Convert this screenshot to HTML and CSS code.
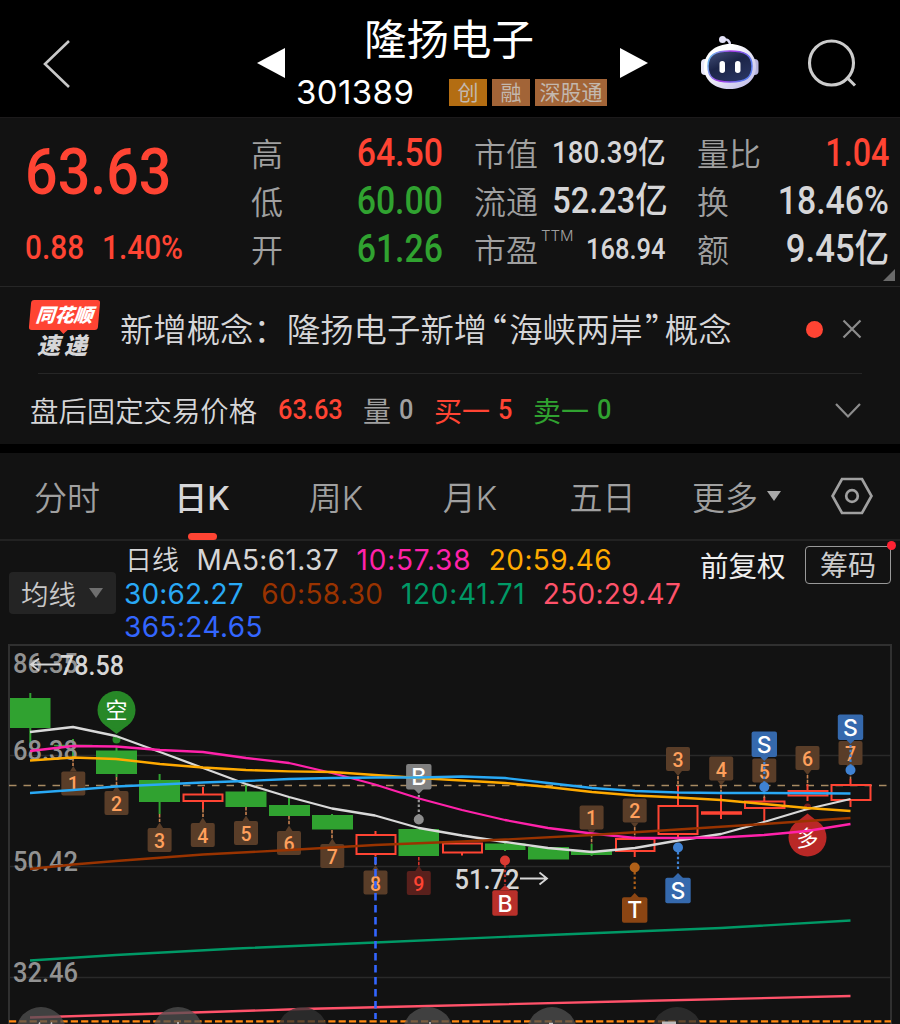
FILE: index.html
```html
<!DOCTYPE html>
<html lang="zh-CN">
<head>
    <meta charset="UTF-8">
    <meta name="viewport" content="width=device-width, initial-scale=1.0">
    <title>隆扬电子 301389</title>
    <link rel="stylesheet" href="styles.css">
</head>
<body>
    <header class="topbar">
        <svg class="back" width="30" height="50" viewBox="0 0 30 50"><path d="M27 2 3 25 27 48"/></svg>
        <svg class="arrow" width="28" height="32" viewBox="0 0 28 32"><path d="M28 1v30L0 16z"/></svg>
        <div class="stock">
            <h1>隆扬电子</h1>
            <div class="stock-sub">
                <span class="code">301389</span>
                <span class="tag tag-gold">创</span>
                <span class="tag">融</span>
                <span class="tag tag-wide">深股通</span>
            </div>
        </div>
        <svg class="arrow" width="28" height="32" viewBox="0 0 28 32"><path d="M0 1v30l28-15z"/></svg>
        <svg class="robot" width="60" height="56" viewBox="0 0 60 56">
            <defs>
                <linearGradient id="shell" x1="0" y1="0" x2="1" y2="1">
                    <stop offset="0.3" stop-color="#ffffff"/>
                    <stop offset="1" stop-color="#b9b5e6"/>
                </linearGradient>
                <linearGradient id="rim" x1="0" y1="0" x2="1" y2="0.3">
                    <stop offset="0" stop-color="#5fd0f0"/>
                    <stop offset="0.5" stop-color="#a838e8"/>
                    <stop offset="1" stop-color="#5a7cf0"/>
                </linearGradient>
                <linearGradient id="face" x1="0" y1="0" x2="0.6" y2="1">
                    <stop offset="0" stop-color="#46527c"/>
                    <stop offset="0.5" stop-color="#1c2548"/>
                    <stop offset="1" stop-color="#27335e"/>
                </linearGradient>
            </defs>
            <path d="M23 4.500q7-1 7 6" fill="none" stroke="#dcdaf5" stroke-width="2.500"/>
            <circle cx="22.500" cy="4.500" r="3.500" fill="#e4e2f8"/>
            <rect x="1" y="24" width="9" height="16" rx="4" fill="#e9e8f8"/>
            <rect x="50" y="24" width="8.500" height="16" rx="4" fill="#b6b4dd"/>
            <path d="M30 9C44 9 56 18 56 32S44 54 29.500 54 4 46 4 32 16 9 30 9z" fill="url(#shell)"/>
            <path d="M30 16c15 0 22 4 22 15s-5 16-22 16S8 42 8 31s7-15 22-15z" fill="url(#face)" stroke="url(#rim)" stroke-width="1.500"/>
            <rect x="19.500" y="26" width="5.500" height="12" rx="2.700" fill="#fff"/>
            <rect x="35" y="26" width="5.500" height="12" rx="2.700" fill="#fff"/>
        </svg>
        <svg class="search" width="52" height="52" viewBox="0 0 52 52"><circle cx="24.500" cy="25" r="22"/><path d="m39.500 39 8.500 8.500"/></svg>
    </header>

    <section class="quote">
        <div class="price">
            <div class="num price-now">63.63</div>
            <div class="price-change"><span class="num">0.88</span><span class="num">1.40%</span></div>
        </div>
        <dl class="stats">
            <div><dt>高</dt><dd class="num up">64.50</dd></div>
            <div><dt>市值</dt><dd class="num small">180.39亿</dd></div>
            <div><dt>量比</dt><dd class="num narrow up">1.04</dd></div>
            <div><dt>低</dt><dd class="num down">60.00</dd></div>
            <div><dt>流通</dt><dd class="num medium">52.23亿</dd></div>
            <div><dt>换</dt><dd class="num">18.46%</dd></div>
            <div><dt>开</dt><dd class="num down">61.26</dd></div>
            <div><dt>市盈<sup>TTM</sup></dt><dd class="num tiny">168.94</dd></div>
            <div><dt>额</dt><dd class="num large">9.45亿</dd></div>
        </dl>
        <svg class="corner" width="12" height="12" viewBox="0 0 12 12"><path d="M12 0v12H0z"/></svg>
    </section>

    <section class="news">
        <div class="news-row">
            <div class="news-logo">
                <span class="logo-top">同花顺</span>
                <span class="logo-bottom">速递</span>
            </div>
            <p class="news-text">新增概念：隆扬电子新增<span class="quote-mark">“</span>海峡两岸<span class="quote-mark">”</span>概念</p>
            <span class="dot"></span>
            <svg class="close" width="20" height="20" viewBox="0 0 20 20"><path d="m1.500 1.500 17 17M18.500 1.500l-17 17"/></svg>
        </div>
        <div class="after-row">
            <span class="after-label">盘后固定交易价格</span>
            <span class="num after-price">63.63</span>
            <span class="after-vol">量</span><span class="num after-vol">0</span>
            <span class="up">买一</span><span class="num up">5</span>
            <span class="down">卖一</span><span class="num down">0</span>
            <svg class="chevron" width="28" height="18" viewBox="0 0 28 18"><path d="m2 3 12 12.500L26 3"/></svg>
        </div>
    </section>

    <nav class="tabs">
        <a>分时</a>
        <a class="active">日K</a>
        <a>周K</a>
        <a>月K</a>
        <a>五日</a>
        <a>更多<svg class="caret" width="14" height="10" viewBox="0 0 14 10"><path d="M0 0h14L7 10z"/></svg></a>
        <a><svg class="settings" width="42" height="38" viewBox="0 0 42 38"><path d="M11 2h20l9.500 17L31 36H11L1.500 19z"/><circle cx="21" cy="19" r="5.800"/></svg></a>
    </nav>

    <section class="legend">
        <button class="ma-button">均线<svg class="caret" width="14" height="10" viewBox="0 0 14 10"><path d="M0 0h14L7 10z"/></svg></button>
        <div class="ma-list">
            <div><span class="cjk">日线</span><span class="ma5">MA5:61.37</span><span class="ma10">10:57.38</span><span class="ma20">20:59.46</span></div>
            <div><span class="ma30">30:62.27</span><span class="ma60">60:58.30</span><span class="ma120">120:41.71</span><span class="ma250">250:29.47</span></div>
            <div><span class="ma365">365:24.65</span></div>
        </div>
        <span class="adjust">前复权</span>
        <button class="chips">筹码</button>
    </section>

    <svg class="chart" width="900" height="384" viewBox="0 640 900 384">
        <defs>
            <g id="tag-below"><path d="M-3.500-12 0-17.500 3.500-12z"/><rect x="-12" y="-12" width="24" height="24" rx="2"/></g>
            <g id="tag-above"><path d="M-4 12 0 17 4 12z"/><rect x="-12" y="-12" width="24" height="24" rx="2"/></g>
            <rect id="sign" x="-12.700" y="-12.700" width="25.400" height="25.400" rx="2"/>
        </defs>

        <!-- grid -->
        <g class="grid">
            <path d="M9 755.500H891M9 866.500H891M9 977.500H891"/>
            <path class="frame" d="M9 1024V645H891V1024"/>
        </g>
        <path class="last-price" d="M9 785.500H891"/>

        <!-- candles -->
        <g class="candle-down">
            <path d="M30.300 693v55M73 739v19M116.500 747v30M159.600 774v40M246 785v22M289 798v18M332 814v15M505 843v8M591.600 844v12"/>
            <path class="body" d="M10 698h40.500v30H10zM54 744.800h38.500v1.500H54zM96 750.500h41V774H96zM139 780h41v22h-41zM225.500 791.500h41V807h-41zM269 805h41v11h-41zM312 815h41v14.500h-41zM398.500 829h40.500v27h-40.500zM485 843.500h40.500v6.500H485zM528 847h41v12.500h-41zM571 851h41v4h-41z"/>
        </g>
        <g class="candle-up">
            <path d="M203 787v7M203 802v7M375.500 831v4M375.500 854v2.500M462 853v2.500M634.700 851v6M678 786v20M678 834v3M721 795v24M764.300 797v4M764.300 808v14M807.500 784v6M807.500 796v5M850.500 779v6M850.500 800v7"/>
            <path d="M183.500 794.500h39v6.500h-39zM356.500 835h39v19h-39zM443 843.500h39v9h-39zM616 839h38.500v12H616zM658.500 806h39v28h-39zM745 801.500h39.500v6.500H745zM788.500 791h39v4.500h-39zM831.500 785h39v15h-39z"/>
            <path class="flat" d="M701 813h41"/>
        </g>

        <!-- count tags -->
        <path class="tag-stem" d="M73 758v8M116.500 777v9M159.600 814v8M203 809v8M246 807v8M289 816v9M332 830v9M375.500 857v8M591.600 834v10M634.700 827v11M678 776v10M721 785v10M764.300 786v12M807.500 775v10M850.500 767v12"/>
        <path class="tag-stem red" d="M418.800 857v10"/>
        <g class="count-tag">
            <use href="#tag-below" x="73.300" y="783.500"/><use href="#tag-below" x="116.500" y="803"/>
            <use href="#tag-below" x="159.600" y="840"/><use href="#tag-below" x="202.800" y="835"/>
            <use href="#tag-below" x="246" y="833"/><use href="#tag-below" x="289" y="843"/>
            <use href="#tag-below" x="332.300" y="856"/><use href="#tag-below" x="375.500" y="882.500"/>
            <use href="#tag-above" x="591.600" y="817.500"/><use href="#tag-above" x="634.700" y="810.500"/>
            <use href="#tag-above" x="678" y="759"/><use href="#tag-above" x="721.200" y="768.500"/>
            <use href="#tag-above" x="764.300" y="770.500"/><use href="#tag-above" x="807.500" y="758"/>
            <use href="#tag-above" x="850.500" y="753"/>
            <use class="nine" href="#tag-below" x="418.800" y="883"/>
        </g>
        <g class="count-text">
            <text x="73.300" y="791">1</text><text x="116.500" y="810.500">2</text><text x="159.600" y="847.500">3</text>
            <text x="202.800" y="842.500">4</text><text x="246" y="840.500">5</text><text x="289" y="850.500">6</text>
            <text x="332.300" y="863.500">7</text><text x="375.500" y="890.500">8</text><text class="nine" x="418.800" y="891">9</text>
            <text x="591.600" y="825">1</text><text x="634.700" y="818">2</text><text x="678" y="767">3</text>
            <text x="721.200" y="776.500">4</text><text x="764.300" y="778.500">5</text><text x="807.500" y="765.500">6</text>
            <text x="850.500" y="761">7</text>
        </g>

        <!-- long / short pins -->
        <g class="pin-short">
            <path d="M105 725 116.500 734 128 725z"/><circle cx="116.500" cy="710" r="19"/><circle cx="116.500" cy="739.500" r="4"/>
            <text x="116.500" y="718">空</text>
        </g>
        <g class="pin-long">
            <path d="M798 821 807.500 813.500 817 821z"/><circle cx="807.500" cy="837.500" r="19"/><circle cx="807.500" cy="807" r="3.500" opacity="0.6"/>
            <text x="807.500" y="845.500">多</text>
        </g>

        <!-- axis labels -->
        <g class="axis">
            <text x="13" y="673" textLength="65" lengthAdjust="spacingAndGlyphs">86.35</text>
            <text x="13" y="759.500" textLength="65" lengthAdjust="spacingAndGlyphs">68.38</text>
            <text x="13" y="870.500" textLength="65" lengthAdjust="spacingAndGlyphs">50.42</text>
            <text x="13" y="981.500" textLength="65" lengthAdjust="spacingAndGlyphs">32.46</text>
        </g>
        <g class="extreme">
            <path d="M60 664.500H31M39 658.500l-8 6 8 6"/>
            <text x="60" y="674.500" textLength="64" lengthAdjust="spacingAndGlyphs">78.58</text>
            <text x="454.500" y="888.500" textLength="65" lengthAdjust="spacingAndGlyphs">51.72</text>
            <path d="M520 878.500h26.500M539.500 872.500l7.500 6-7.500 6"/>
        </g>

        <!-- buy / sell signs -->
        <g class="sign-gray">
            <circle cx="418.800" cy="819.500" r="5"/><path d="M418.800 795v20"/><path class="tip" d="M414 789h9.600l-4.800 5z"/>
            <use href="#sign" x="418.800" y="776.800"/><text x="418.800" y="785">B</text>
        </g>
        <g class="sign-red">
            <circle cx="505" cy="860.500" r="5"/><path d="M505 865v20"/><path class="tip" d="M500 890h10l-5-5z"/>
            <use href="#sign" x="505" y="903"/><text x="505" y="911.500">B</text>
        </g>
        <g class="sign-orange">
            <circle cx="634.700" cy="867.500" r="5"/><path d="M634.700 872v18"/><path class="tip" d="M630 898h9.500l-4.800-5z"/>
            <use href="#sign" x="634.700" y="910"/><text x="634.700" y="918">T</text>
        </g>
        <g class="sign-blue">
            <circle cx="678" cy="847.500" r="5"/><path d="M678 852v18"/><path class="tip" d="M673 878h10l-5-5z"/>
            <use href="#sign" x="678" y="890.500"/><text x="678" y="899">S</text>
            <circle cx="764.300" cy="787" r="5"/><path d="M764.300 762v22"/><path class="tip" d="M759.300 756h10l-5 5z"/>
            <use href="#sign" x="764.300" y="744.300"/><text x="764.300" y="752.500">S</text>
            <circle cx="850.500" cy="770" r="5"/><path d="M850.500 745v22"/><path class="tip" d="M845.500 739h10l-5 5z"/>
            <use href="#sign" x="850.500" y="727.300"/><text x="850.500" y="735.500">S</text>
        </g>

        <!-- moving averages -->
        <g class="lines">
            <polyline class="ma5" points="30,732 73,727 116,736 160,752 203,768 246,784 289,797 332,808.500 375,815.500 419,828 462,835.500 505,842 548,848 592,852 635,848 678,840.500 721,834 764,822 807.500,809 850.500,799"/>
            <polyline class="ma10" points="30,751 73,746 116,746.500 160,750 203,752 246,758 289,763 332,773 375,784.500 419,798.500 462,810 505,820 548,828 592,833.500 635,838 678,838 721,837.500 764,835 807,831 850.500,824"/>
            <polyline class="ma20" points="30,760.500 73,757.500 116,759 160,764 203,767.500 246,770 289,771.300 332,772 375,775 419,778 462,780.500 505,783 548,787 592,792 635,795.500 678,797.500 721,800 764,804 807,808 850.500,811"/>
            <polyline class="ma30" points="30,793 73,790 116,786.500 160,784.500 203,782.500 246,781 289,779 332,778 375,777.500 419,777.500 462,776.500 505,778 548,783 592,788 635,791 678,792.500 721,793 764,793 850.500,793.500"/>
            <polyline class="ma60" points="30,869 73,864.500 116,861 203,854.500 289,850 375,845 462,841.500 505,839.500 592,835 678,829.500 764,824 850.500,818"/>
            <polyline class="ma120" points="30,960.500 116,955 237,948.500 375,942.500 549,935 634,931.500 721,928 850.500,920.500"/>
            <polyline class="ma250" points="30,1017.500 178,1013 302,1009 428,1006 640,1001 850.500,996"/>
        </g>
        <path class="event-line" d="M375.500 857V1019"/>
        <path class="bottom-line" d="M9 1021.300H891"/>

        <!-- floating round buttons cut by the bottom edge -->
        <g class="floats">
            <circle cx="41" cy="1032" r="25"/><circle cx="178" cy="1032" r="25"/><circle class="dim" cx="302.500" cy="1032" r="25"/>
            <circle cx="428" cy="1032" r="25"/><circle cx="552" cy="1032" r="25"/><circle class="dim" cx="677" cy="1032" r="25"/>
            <path d="M39 1024l1-1.500M51 1024l1-1.500M178 1022v2M430 1022v2M549 1023.500h4"/>
            <rect x="662" y="1021.500" width="14" height="3"/>
        </g>
    </svg>
</body>
</html>
```

FILE: styles.css
```css
:root {
    --bg: #121212;
    --line: #262626;
    --up: #ff4433;
    --down: #30a230;
    --text: #d6d6d8;
    --muted: #a0a0a0;
    --cjk: "Noto Sans CJK SC", sans-serif;
}

* {
    box-sizing: border-box;
    margin: 0;
    padding: 0;
}

body {
    width: 900px;
    height: 1024px;
    overflow: hidden;
    background-color: #000;
    color: var(--text);
    font-family: Inter, var(--cjk);
    white-space: nowrap;
}

svg {
    display: block;
    flex: none;
}

button {
    font-family: inherit;
    background: none;
    border: none;
}

.up { color: var(--up); }
.down { color: var(--down); }

/* narrow numerals */
.num {
    font-family: Roboto, var(--cjk);
    font-weight: 500;
    transform: scaleX(0.89);
    transform-origin: left center;
}

/* top bar */
.topbar {
    display: flex;
    height: 118px;
    padding-left: 42px;
    border-bottom: 1px solid #1c1a1b;
}

.back {
    margin: 39px 185px 0 0;
    fill: none;
    stroke: #c8c8c8;
    stroke-width: 2.6;
}

.arrow {
    margin-top: 47px;
    fill: #fff;
}

.stock {
    width: 335px;
    padding: 8px 0 0 12px;
}

.stock h1 {
    font-family: var(--cjk);
    font-size: 42.5px;
    font-weight: 400;
    line-height: 58px;
    padding-left: 67px;
    color: #fff;
}

.stock-sub {
    display: flex;
    align-items: center;
    gap: 5px;
    height: 52px;
}

.code {
    width: 148px;
    margin-left: -1px;
    font-size: 33px;
    letter-spacing: 0.4px;
    color: #fff;
}

.tag {
    width: 38px;
    height: 27px;
    background-color: #a26437;
    color: #c3b8ae;
    font-family: var(--cjk);
    font-size: 21px;
    line-height: 25px;
    text-align: center;
}

.tag-gold { background-color: #b36d12; }
.tag-wide { width: 72px; }

.robot { margin: 35px 0 0 52px; }

.search {
    margin: 38px 0 0 47px;
    fill: none;
    stroke: #ccc;
    stroke-width: 3.1;
}

/* quote */
.quote {
    display: flex;
    position: relative;
    height: 169px;
    background-color: var(--bg);
    border-bottom: 1px solid var(--line);
}

.price {
    width: 251px;
    padding: 18px 0 0 25px;
    color: var(--up);
}

.price-now {
    font-size: 64.5px;
    line-height: 72px;
}

.price-change {
    display: flex;
    margin-top: 20px;
    font-size: 33.5px;
    line-height: 40px;
}

.price-change span { width: 77px; }

.stats {
    display: grid;
    grid-template-columns: repeat(3, 192px);
    grid-auto-rows: 48px;
    column-gap: 31px;
    padding-top: 10px;
}

.stats div {
    display: flex;
    justify-content: space-between;
    align-items: center;
}

.stats dt {
    width: 66px;
    font-family: var(--cjk);
    font-size: 32px;
    font-weight: 350;
    line-height: 48px;
    color: var(--muted);
}

.stats sup {
    display: inline-block;
    height: 20px;
    margin-left: 3px;
    font-family: Inter;
    font-size: 15px;
    line-height: 15px;
    vertical-align: 21px;
}

.stats dd {
    font-size: 38px;
    line-height: 48px;
    padding-top: 2px;
    transform-origin: right center;
}

.stats dd.large { font-size: 39px; }
.stats dd.medium { font-size: 36.5px; }
.stats dd.small { font-size: 31px; }
.stats dd.tiny { font-size: 30px; transform: scaleX(0.85); }
.stats dd.narrow { transform: scaleX(0.85); }

.corner {
    position: absolute;
    right: 5px;
    bottom: 5px;
    fill: #6a6a6a;
}

/* news */
.news {
    height: 157px;
    padding: 0 38px 0 30px;
    background-color: var(--bg);
}

.news-row {
    display: flex;
    align-items: center;
    height: 86px;
    padding-bottom: 2px;
}

.news-logo {
    width: 90px;
    font-family: var(--cjk);
    font-weight: 900;
}

.news-logo span {
    display: block;
    font-size: 19px;
    font-style: italic;
}

.news-logo .logo-top {
    position: relative;
    width: 69px;
    height: 30px;
    border-radius: 3px;
    background-color: var(--up);
    color: #fff;
    line-height: 28px;
    text-align: center;
    transform: skewX(-5deg);
}

.logo-top::after {
    content: "";
    position: absolute;
    left: 30px;
    top: 29px;
    border: 5px solid transparent;
    border-top-color: var(--up);
    border-bottom: none;
}

.news-logo .logo-bottom {
    padding-left: 7px;
    font-size: 23px;
    letter-spacing: 4px;
    line-height: 29px;
}

.news-text {
    width: 687px;
    padding-bottom: 2px;
    font-family: var(--cjk);
    font-size: 33.4px;
    line-height: 48px;
    font-weight: 350;
}

.quote-mark {
    display: inline-block;
    width: 22px;
    text-align: center;
    font-feature-settings: "palt";
}

.dot {
    width: 17px;
    height: 17px;
    margin-right: 19px;
    border-radius: 50%;
    background-color: var(--up);
}

.close, .chevron {
    fill: none;
    stroke: #8c8c8c;
    stroke-width: 2.2;
}

.after-row {
    display: flex;
    align-items: center;
    height: 71px;
    margin-left: 8px;
    padding-top: 1px;
    border-top: 1px solid var(--line);
    font-size: 28px;
}

.after-row span { flex: none; }

.after-label {
    width: 248px;
    margin-left: -8px;
    font-size: 28.4px;
    font-weight: 350;
}

.after-price {
    width: 85px;
    color: var(--up);
}

.after-vol { color: var(--muted); }
.after-row .num { font-size: 28.5px; }
.after-row .after-vol:not(.num), .after-row .up:not(.num), .after-row .down:not(.num) { margin-right: 8px; }
.after-row .after-vol.num, .after-row .up.num { width: 35px; }

.chevron { margin-left: auto; }

/* tabs */
.tabs {
    display: grid;
    grid-template-columns: 134px 136px 132px 136px 129px 139px 92px;
    height: 88px;
    margin-top: 9px;
    background-color: var(--bg);
    border-bottom: 2px solid #222;
}

.tabs a {
    display: flex;
    position: relative;
    justify-content: center;
    align-items: center;
    font-size: 33px;
    font-weight: 350;
    color: var(--muted);
}

.tabs .active {
    color: var(--text);
    font-weight: 500;
}

.tabs .active::after {
    content: "";
    position: absolute;
    bottom: -1px;
    width: 29px;
    height: 7px;
    border-radius: 4px;
    background-color: var(--up);
}

.tabs .caret {
    margin-left: 9px;
    fill: #a8a8a8;
}

.settings {
    fill: none;
    stroke: #a0a0a0;
    stroke-width: 2.7;
}

/* legend */
.legend {
    display: flex;
    height: 99px;
    padding-left: 9px;
    background-color: var(--bg);
}

.ma-button {
    display: flex;
    align-items: center;
    width: 107px;
    height: 42px;
    margin: 31px 8px 0 0;
    padding-left: 12px;
    border-radius: 4px;
    background-color: #242424;
    color: #c8c8c8;
    font-family: var(--cjk);
    font-size: 27.5px;
    font-weight: 350;
}

.ma-button .caret {
    margin-left: 13px;
    fill: #6f6f6f;
}

.ma-list {
    width: 576px;
    font-size: 28px;
    letter-spacing: 0.4px;
    line-height: 33.5px;
    padding-top: 3px;
}

.ma-list div { height: 33.5px; }

.ma-list span { margin-right: 17.5px; }

.ma-list .cjk {
    margin-left: 1px;
    font-size: 27px;
    letter-spacing: 0;
    font-weight: 350;
}

.ma-list .ma5 { color: #d6d6d6; }
.ma-list .ma10 { color: #ff22aa; letter-spacing: 0.8px; }
.ma-list .ma20 { color: #ffaa00; }
.ma-list .ma30 { color: #29a9f5; letter-spacing: 0.15px; }
.ma-list .ma60 { color: #993300; }
.ma-list .ma120 { color: #009966; letter-spacing: 0.7px; }
.ma-list .ma250 { color: #ff526a; letter-spacing: 0.3px; }
.ma-list .ma365 { color: #3366ff; }

.adjust {
    width: 105px;
    font-size: 28.5px;
    line-height: 51px;
    color: #eee;
}

.chips {
    position: relative;
    width: 86px;
    height: 38px;
    margin-top: 5px;
    padding-top: 1px;
    border: 1px solid #999;
    border-radius: 4px;
    color: #ccc;
    font-size: 28px;
    line-height: 36px;
}

.chips::after {
    content: "";
    position: absolute;
    top: -6px;
    right: -6px;
    width: 9px;
    height: 9px;
    border-radius: 50%;
    background-color: #ff2233;
}

/* chart */
.chart {
    background-color: var(--bg);
    font-family: Roboto, var(--cjk);
}

.chart text { text-anchor: middle; }

.grid {
    fill: none;
    stroke: #292929;
    stroke-width: 1.4;
}

.frame {
    stroke: #303030;
    stroke-width: 2;
}

.last-price {
    stroke: #a88b63;
    stroke-width: 1.3;
    stroke-dasharray: 7.5 7;
}

.candle-down { stroke: var(--down); stroke-width: 2; }
.candle-down .body { fill: var(--down); stroke: none; }
.candle-up { fill: none; stroke: var(--up); stroke-width: 2; }
.candle-up .flat { stroke-width: 3.5; }

.lines {
    fill: none;
    stroke-width: 2.3;
    stroke-linejoin: round;
}

.lines .ma5 { stroke: #d9d9d9; }
.lines .ma10 { stroke: #ff22aa; }
.lines .ma20 { stroke: #ffaa00; }
.lines .ma30 { stroke: #29a9f5; }
.lines .ma60 { stroke: #993300; }
.lines .ma120 { stroke: #009966; }
.lines .ma250 { stroke: #ff526a; }

.tag-stem {
    stroke: #c88250;
    stroke-width: 1.6;
    stroke-dasharray: 3.5 1.3;
}

.tag-stem.red { stroke: #d33228; }

.count-tag { fill: #593d28; }
.count-tag .nine { fill: #59201c; }

.count-text {
    fill: #ffa05c;
    font-size: 19.5px;
    font-weight: 500;
}

.count-text .nine { fill: var(--up); }

.pin-short { fill: #278827; }
.pin-long { fill: #b92826; }

.pin-short text, .pin-long text {
    fill: #fff;
    font-size: 22px;
}

.sign-gray, .sign-red, .sign-orange, .sign-blue {
    stroke-width: 2.2;
    stroke-dasharray: 2.5 2.3;
}

.chart .tip, .chart use, .chart circle, .chart text { stroke: none; }

.sign-gray { fill: #808080; stroke: #999; }
.sign-red { fill: #b9302a; stroke: #b9302a; }
.sign-orange { fill: #8b4513; stroke: #b06018; }
.sign-blue { fill: #3569ad; stroke: #3f82d3; }
.sign-gray circle { fill: #8d8d8d; }
.sign-red circle { fill: #d93a32; }
.sign-orange circle { fill: #b06018; }
.sign-blue circle { fill: #3f82d3; }

.sign-gray text, .sign-red text, .sign-orange text, .sign-blue text {
    fill: #fff;
    font-family: Inter;
    font-size: 23px;
    font-weight: 500;
}

.chart .axis text, .chart .extreme text {
    font-size: 28px;
    font-weight: 500;
    text-anchor: start;
}

.axis { fill: #929292; }

.extreme { fill: #d6d6d6; }
.extreme path { fill: none; stroke: #d6d6d6; stroke-width: 1.8; }

.event-line {
    stroke: #3366ff;
    stroke-width: 2.6;
    stroke-dasharray: 7.5 4.5;
}

.bottom-line {
    stroke: #ff8811;
    stroke-width: 2.2;
    stroke-dasharray: 7.2 3.1;
}

.floats { fill: #505050; fill-opacity: 0.75; }
.floats .dim { fill: #333; }
.floats path { stroke: #ccc; stroke-width: 1.5; }
.floats rect { fill: #bbb; fill-opacity: 1; }
```
